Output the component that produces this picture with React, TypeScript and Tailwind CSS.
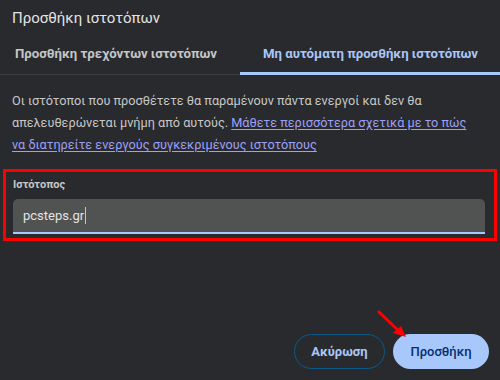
export default function App() {
  return (
    <div
      className="relative flex h-[380px] w-[500px] flex-col overflow-hidden bg-[#292a2d] text-[#c4c7c5]"
      style={{ fontFamily: 'Roboto, "Noto Sans", sans-serif' }}
    >
      <div className="flex h-9 items-center px-3 text-[15px] text-[#e3e3e3]">
        Προσθήκη ιστοτόπων
      </div>

      <div className="flex">
        <div className="flex w-[240px] flex-col">
          <div className="flex h-9 items-center pl-[15px] text-[13.2px] font-bold text-[#c4c7c5]">
            Προσθήκη τρεχόντων ιστοτόπων
          </div>
          <div className="h-[3px] border-b border-[#3c3d40]" />
        </div>
        <div className="flex flex-1 flex-col">
          <div className="flex h-9 items-center pl-[23px] text-[13.2px] font-bold text-[#a8c7fa]">
            Μη αυτόματη προσθήκη ιστοτόπων
          </div>
          <div className="h-[3px] bg-[#a8c7fa]" />
        </div>
      </div>

      <p className="mt-[15px] pl-3 pr-[28px] text-[12.7px] leading-[22px] text-[#c7c7c7]">
        Οι ιστότοποι που προσθέτετε θα παραμένουν πάντα ενεργοί και δεν θα
        απελευθερώνεται μνήμη από αυτούς.{" "}
        <a className="text-[#9ea0f7] underline underline-offset-2">
          Μάθετε περισσότερα σχετικά με το πώς να διατηρείτε ενεργούς
          συγκεκριμένους ιστοτόπους
        </a>
      </p>

      <div className="mx-[3px] mt-[13px] border-[3px] border-[#ff0000] pb-[4px] pl-[7px] pr-[9px] pt-[5px]">
        <div className="text-[11px] font-bold leading-4 text-[#c4c7c5]">Ιστότοπος</div>
        <div className="mt-[6px] flex h-[35px] items-center rounded-t-[5px] border-b-[2px] border-[#a8c7fa] bg-[#505352] pl-[10px] text-[13px] text-[#e3e3e3]">
          pcsteps.gr
          <span className="ml-[1px] h-[17px] w-px bg-[#a8c7fa]" />
        </div>
      </div>

      <div className="mt-auto flex justify-end gap-2 pb-[11px] pr-[11px]">
        <button className="h-[35px] w-[91px] rounded-full border border-[#0b5a87] text-[13px] font-bold text-[#a8c7fa]">
          Ακύρωση
        </button>
        <button className="h-[35px] w-[96px] rounded-full bg-[#a8c7fa] text-[13px] font-medium text-[#062e6f]">
          Προσθήκη
        </button>
      </div>

      <svg className="absolute left-[370px] top-[305px]" width="45" height="40" viewBox="0 0 45 40">
        <line x1="9" y1="7" x2="30" y2="27" stroke="#ff0000" strokeWidth="3" strokeLinecap="round" />
        <polygon points="36,32 23,28 31,21" fill="#ff0000" />
      </svg>
    </div>
  );
}
